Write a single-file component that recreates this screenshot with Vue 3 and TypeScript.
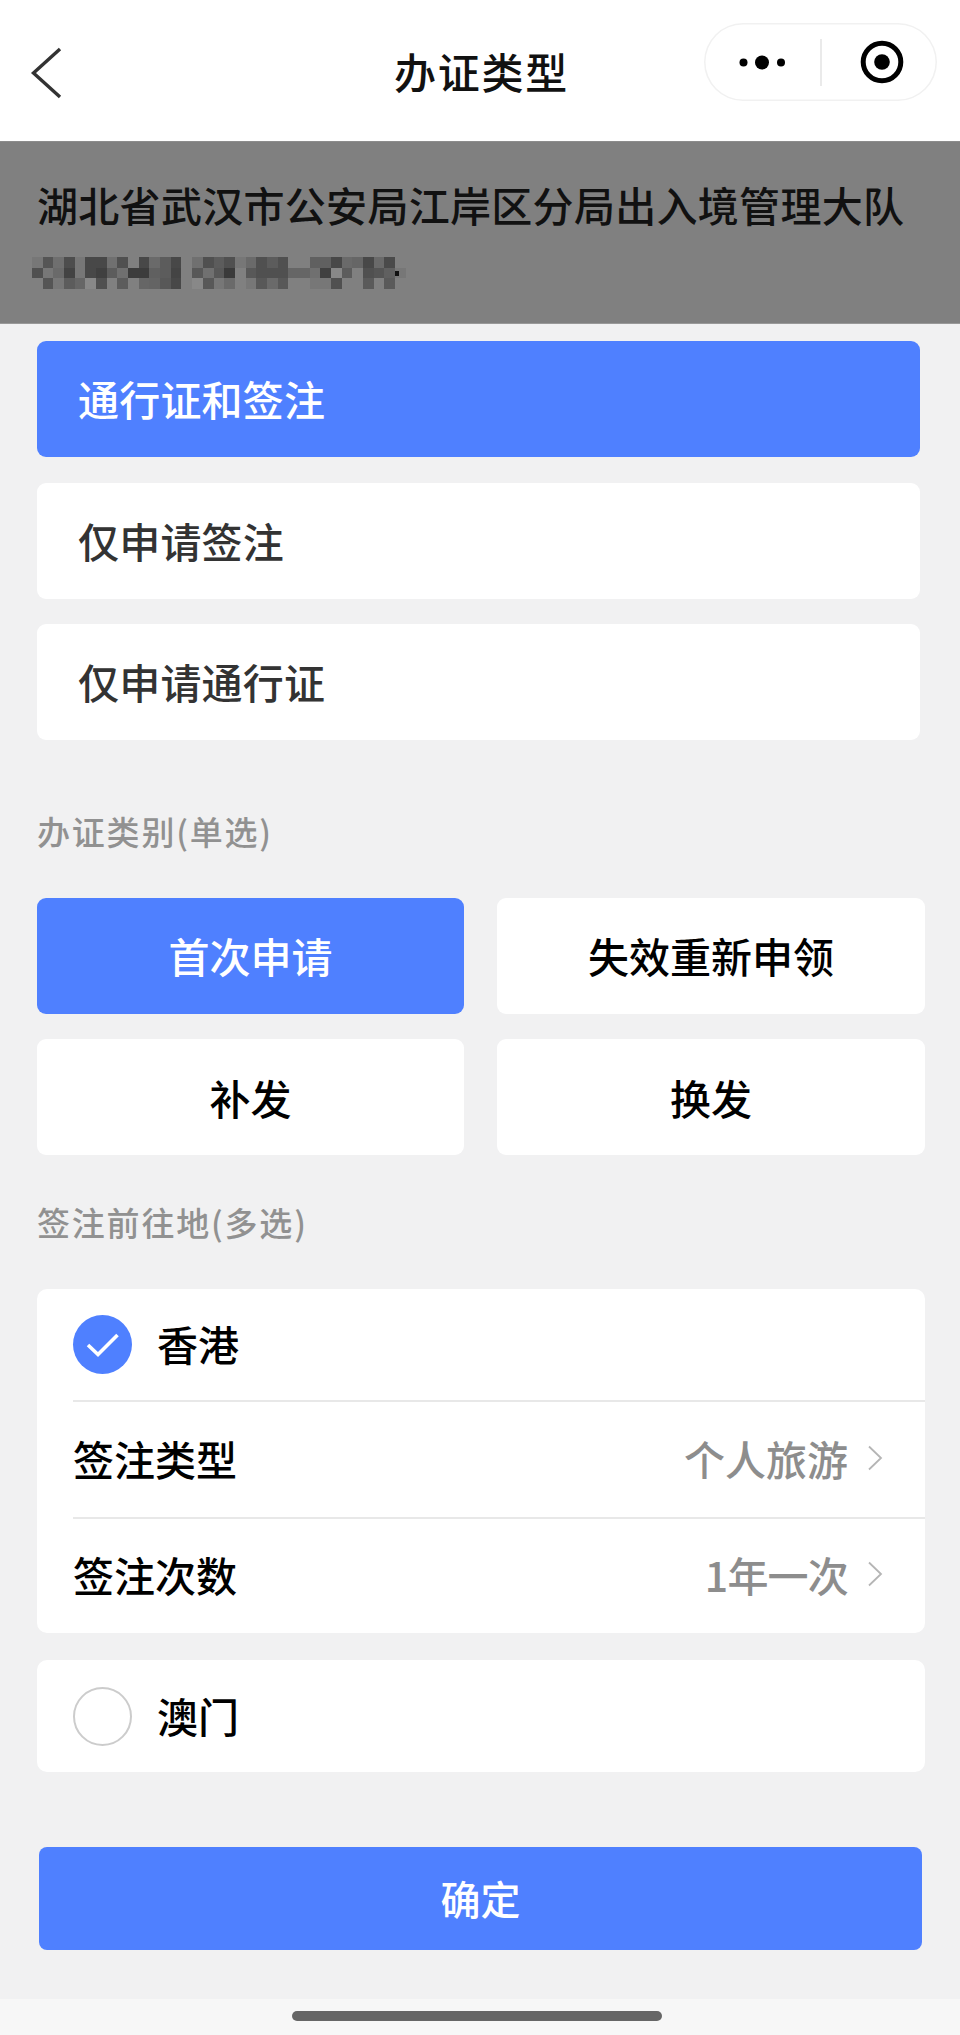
<script setup lang="ts">
const mosaicGroups: string[][][] = [
  [
    ['777', '555', '6f6f6f', '4d4d4d', '777', '484848', '484848', '707070', '505050', '808080', '484848', '6a6a6a', '5c5c5c', '484848'],
    ['505050', '777', '6a6a6a', '434343', '777', '484848', '404040', '5c5c5c', '707070', '3c3c3c', '3c3c3c', '606060', '5c5c5c', '444'],
    ['808080', '555', '777', '5c5c5c', '666', '888', '505050', '808080', '5c5c5c', '808080', '666', '646464', '585858', '484848'],
  ],
  [
    ['707070', '505050', '5c5c5c', '505050', '777', '6a6a6a', '505050', '5c5c5c', '505050', '808080', '808080', '606060', '606060', '484848', '6a6a6a', '666', '484848', '6a6a6a', '4a4a4a', '808080'],
    ['585858', '707070', '585858', '3a3a3a', '808080', '585858', '505050', '505050', '505050', '666', '666', '707070', '404040', '888', '5c5c5c', '808080', '505050', '555', '606060', '777'],
    ['888', '585858', '777', '6a6a6a', '808080', '777', '585858', '6a6a6a', '585858', '808080', '808080', '777', '777', '505050', '808080', '808080', '5a5a5a', '808080', '5a5a5a', '808080'],
  ],
]

const flatGroups = mosaicGroups.map((rows) => ({
  columns: rows[0].length,
  cells: rows.flat().map((hex) => `#${hex}`),
}))

const applyTypes = [
  { label: '通行证和签注', active: true },
  { label: '仅申请签注', active: false },
  { label: '仅申请通行证', active: false },
]

const categories = [
  { label: '首次申请', active: true },
  { label: '失效重新申领', active: false },
  { label: '补发', active: false },
  { label: '换发', active: false },
]

const settings = [
  { label: '签注类型', value: '个人旅游', tall: true, narrow: false },
  { label: '签注次数', value: '1年一次', tall: false, narrow: true },
]
</script>

<template>
  <div class="page">
    <header class="nav">
      <svg class="back" width="32" height="52" viewBox="0 0 32 52" aria-label="返回">
        <path d="M30 2 L3.5 26 L30 50" fill="none" stroke="#333" stroke-width="3.4" />
      </svg>
      <h1 class="nav-title">办证类型</h1>
      <div class="capsule">
        <svg width="116" height="78" viewBox="0 0 116 78" class="capsule-more">
          <circle cx="39.5" cy="39.5" r="4" fill="#000" />
          <circle cx="58" cy="39.5" r="7" fill="#000" />
          <circle cx="77" cy="39.5" r="4" fill="#000" />
        </svg>
        <span class="capsule-divider"></span>
        <svg width="116" height="78" viewBox="0 0 116 78" class="capsule-close">
          <circle cx="60" cy="39" r="18.8" fill="none" stroke="#000" stroke-width="5" />
          <circle cx="60" cy="39" r="7.8" fill="#000" />
        </svg>
      </div>
    </header>

    <section class="band">
      <div class="band-name">湖北省武汉市公安局江岸区分局出入境管理大队</div>
      <div class="mosaic">
        <div
          v-for="(group, g) in flatGroups"
          :key="g"
          class="mosaic-group"
          :style="{ gridTemplateColumns: `repeat(${group.columns}, 1fr)`, width: `${group.columns * 10.67}px` }"
        >
          <span
            v-for="(color, i) in group.cells"
            :key="i"
            class="mosaic-cell"
            :style="{ background: color }"
          ></span>
        </div>
        <span class="mosaic-speck"></span>
      </div>
    </section>

    <main class="content">
      <div class="type-list">
        <button
          v-for="item in applyTypes"
          :key="item.label"
          class="type-card"
          :class="{ active: item.active }"
        >{{ item.label }}</button>
      </div>

      <div class="section-label first">办证类别(单选)</div>
      <div class="category-grid">
        <button
          v-for="item in categories"
          :key="item.label"
          class="category-card"
          :class="{ active: item.active }"
        >{{ item.label }}</button>
      </div>

      <div class="section-label second">签注前往地(多选)</div>
      <div class="panel">
        <div class="row row-check">
          <span class="radio checked">
            <svg width="59" height="59" viewBox="0 0 59 59">
              <path d="M15 30 L25 39.5 L44.5 20" fill="none" stroke="#fff" stroke-width="3.6" />
            </svg>
          </span>
          <span class="row-name">香港</span>
        </div>
        <div
          v-for="item in settings"
          :key="item.label"
          class="row row-setting"
          :class="{ tall: item.tall }"
        >
          <span class="row-label">{{ item.label }}</span>
          <span class="row-value" :class="{ narrow: item.narrow }">{{ item.value }}</span>
          <svg class="chevron" width="16" height="26" viewBox="0 0 16 26">
            <path d="M2 1.5 L14 13 L2 24.5" fill="none" stroke="#b5b5b5" stroke-width="1.8" />
          </svg>
        </div>
      </div>

      <div class="panel panel-macau">
        <span class="radio"></span>
        <span class="row-name">澳门</span>
      </div>

      <button class="confirm">确定</button>
    </main>

    <footer class="home-bar"><span class="home-indicator"></span></footer>
  </div>
</template>

<style>
html,
body {
  margin: 0;
  background: #f1f1f2;
}
</style>

<style scoped>
.page {
  width: 960px;
  height: 2035px;
  background: #f1f1f2;
  font-family: "Noto Sans CJK SC", "Noto Sans", sans-serif;
  overflow: hidden;
}

button {
  border: 0;
  padding: 0;
  font-family: inherit;
  cursor: pointer;
}

.nav {
  position: relative;
  height: 141px;
  background: #fff;
  display: flex;
  justify-content: center;
}

.back {
  position: absolute;
  left: 30px;
  top: 47px;
}

.nav-title {
  margin: 44px 0 0;
  padding-left: 3px;
  font-size: 42px;
  line-height: 54px;
  font-weight: 500;
  letter-spacing: 1.8px;
  color: #111;
}

.capsule {
  position: absolute;
  left: 704px;
  top: 23px;
  width: 233px;
  height: 78px;
  box-sizing: border-box;
  border-radius: 39px;
  box-shadow: inset 0 0 0 1.5px #f1f1f1;
  display: flex;
  align-items: center;
}

.capsule-more,
.capsule-close {
  flex: none;
}

.capsule-divider {
  width: 1.5px;
  height: 47px;
  background: #eaeaea;
  flex: none;
}

.band {
  height: 183px;
  background: #808080;
  border-top: 1px solid #8c8c8c;
  border-bottom: 1px solid #999;
  box-sizing: border-box;
  padding: 36px 0 0 37px;
}

.band-name {
  font-size: 41px;
  line-height: 52px;
  font-weight: 500;
  letter-spacing: 0.3px;
  color: #111;
  white-space: nowrap;
}

.mosaic {
  position: relative;
  display: flex;
  gap: 11px;
  margin: 27px 0 0 -5px;
  height: 32px;
}

.mosaic-group {
  display: grid;
  grid-template-rows: repeat(3, 1fr);
  height: 32px;
}

.mosaic-speck {
  position: absolute;
  left: 363px;
  top: 14px;
  width: 4px;
  height: 5px;
  background: #111;
}

.content {
  padding: 17px 35px 0 37px;
}

.type-list {
  display: flex;
  flex-direction: column;
  gap: 25.5px;
  width: 883px;
}

.type-card {
  height: 116px;
  padding: 0 0 2px 41px;
  background: #fff;
  border-radius: 9px;
  text-align: left;
  font-size: 41px;
  font-weight: 500;
  letter-spacing: 0.2px;
  color: #333;
}

.type-card.active {
  background: #4f80ff;
  color: #fff;
}

.section-label {
  height: 40px;
  font-size: 33px;
  line-height: 40px;
  font-weight: 500;
  letter-spacing: 1.8px;
  color: #919191;
}

.section-label.first {
  margin-top: 71px;
}

.section-label.second {
  margin-top: 47px;
}

.category-grid {
  display: grid;
  grid-template-columns: 427px 428px;
  column-gap: 33px;
  row-gap: 25px;
  margin-top: 47px;
}

.category-card {
  height: 116px;
  padding-bottom: 2px;
  background: #fff;
  border-radius: 9px;
  font-size: 41px;
  font-weight: 500;
  color: #000;
}

.category-card:nth-child(n + 3) {
  padding-bottom: 0;
}

.category-card.active {
  background: #4f80ff;
  color: #fff;
}

.panel {
  margin-top: 47px;
  width: 888px;
  height: 344px;
  background: #fff;
  border-radius: 10px;
}

.row {
  display: flex;
  align-items: center;
}

.row-check {
  height: 111px;
  padding-left: 36px;
  box-sizing: border-box;
}

.radio {
  flex: none;
  width: 59px;
  height: 59px;
  box-sizing: border-box;
  border-radius: 50%;
  border: 2.5px solid #ccc;
}

.radio.checked {
  border: 0;
  background: #4f80ff;
}

.radio svg {
  display: block;
}

.row-name {
  margin-left: 25px;
  padding-bottom: 3px;
  font-size: 41px;
  font-weight: 500;
  color: #000;
}

.row-setting {
  margin-left: 36px;
  height: 116px;
  box-sizing: border-box;
  border-top: 2px solid #e8e8e8;
  padding: 0 42px 4px 0;
}

.row-setting.tall {
  height: 117px;
}

.row-label {
  font-size: 41px;
  font-weight: 500;
  color: #000;
  flex: 1;
}

.row-value {
  font-size: 41px;
  color: #8d8d8d;
  font-weight: 500;
}

.row-value.narrow {
  letter-spacing: -0.8px;
}

.chevron {
  margin-left: 19px;
  flex: none;
}

.panel-macau {
  margin-top: 27px;
  height: 112px;
  display: flex;
  align-items: center;
  padding-left: 36px;
  box-sizing: border-box;
}

.confirm {
  display: block;
  margin: 75px 0 0 2px;
  width: 883px;
  height: 103px;
  padding-bottom: 2px;
  background: #4f80ff;
  border-radius: 8px;
  font-size: 40px;
  font-weight: 500;
  color: #fff;
}

.home-bar {
  margin-top: 49px;
  height: 36px;
  background: #f7f7f7;
  display: flex;
  justify-content: center;
  align-items: flex-start;
  padding: 12px 6px 0 0;
  box-sizing: border-box;
}

.home-indicator {
  width: 370px;
  height: 10px;
  border-radius: 5px;
  background: #666;
}
</style>
